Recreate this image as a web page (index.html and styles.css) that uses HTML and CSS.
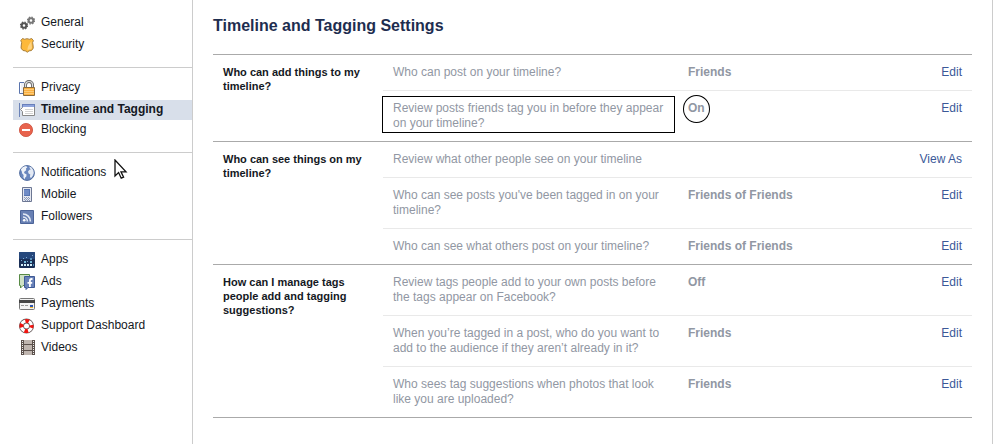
FILE: index.html
```
<!DOCTYPE html>
<html lang="en">
<head>
<meta charset="UTF-8">
<meta name="viewport" content="width=device-width, initial-scale=1.0">
<title>Timeline and Tagging Settings</title>
<link rel="stylesheet" href="styles.css">
</head>
<body>
<div class="page">
<nav class="sidebar">
<ul class="group">
<li><a href="#general">
<svg class="icon" viewBox="0 0 16 16" fill="none"><circle cx="5" cy="10.5" r="2.300" stroke="#555" stroke-width="2"/><circle cx="5" cy="10.5" r="3.500" stroke="#555" stroke-width="1.200" stroke-dasharray="1.500 1.250"/><circle cx="12" cy="5.500" r="2.300" stroke="#777" stroke-width="2"/><circle cx="12" cy="5.500" r="3.500" stroke="#777" stroke-width="1.200" stroke-dasharray="1.500 1.250"/></svg>
<span>General</span></a></li>
<li><a href="#security">
<svg class="icon" viewBox="0 0 16 16"><path d="M3.5 1.5 Q5.5 3 8 1.7 Q10.5 3 12.7 1.5 L14.4 3.6 Q13 5.5 14 8 Q15.2 11.5 12.5 13.5 Q9.8 13.4 8.3 15.2 Q6.5 13.4 4 13.5 Q1 11.5 2.3 8 Q3.3 5.5 1.8 3.6Z" fill="#fdb93a" stroke="#a8803f"/><path d="M12.6 4 Q12 6 12.7 8 Q13.5 11 12 12.4 Q10 12.2 8.5 13.5 Q8 9 12.6 4Z" fill="#fed37f"/></svg>
<span>Security</span></a></li>
</ul>
<ul class="group">
<li><a href="#privacy">
<svg class="icon" viewBox="0 0 16 16"><path d="M5 2.5H.5v11H5" fill="#fff" stroke="#5a74ad"/><path d="M2 3h4v10H2z" fill="#eef0f6"/><path d="M6.500 8V5a3.500 3.500 0 0 1 7 0v3" fill="none" stroke="#666" stroke-width="3"/><path d="M6.500 8V5a3.500 3.500 0 0 1 7 0v3" fill="none" stroke="#ddd" stroke-width="1.200"/><path d="M4.500 7.500h11v8h-11z" fill="#fbb040" stroke="#8a6a3c"/><path d="M5 9.500h10M5 11.500h10M5 13.500h10" stroke="#fdcb78"/></svg>
<span>Privacy</span></a></li>
<li class="selected"><a href="#timeline" aria-current="page">
<svg class="icon" viewBox="0 0 16 16"><path d="M.5 1v14" stroke="#6b83b8"/><path d="M3.500 2.500h12v11h-12v-4L1.500 7.500 3.500 5.500z" fill="#fff" stroke="#888"/><path d="M3 2h13v3H3z" fill="#6980bb"/><path d="M4 3h11v2H4z" fill="#8fa5dd"/><path d="M6 7h8v1H6zM6 9h8v1H6zM6 11h8v1H6z" fill="#d4d4d4"/></svg>
<span>Timeline and Tagging</span></a></li>
<li><a href="#blocking">
<svg class="icon" viewBox="0 0 16 16"><circle cx="7" cy="8" r="6.600" fill="#e8634d" stroke="#cc4e3b" stroke-width=".8"/><path d="M3 7h8v2H3z" fill="#fff"/></svg>
<span>Blocking</span></a></li>
</ul>
<ul class="group">
<li><a href="#notifications">
<svg class="icon" viewBox="0 0 16 16"><circle cx="8" cy="8" r="7.400" fill="#6a87be" stroke="#526d9f"/><path d="M1.800 4.500 4 2l3-1 1.400 1.200L7 3.400l.2 1.800L5.500 6.400 5 8l2.600 1.400-.3 2-1.300 1.400-.2 1.700-1.400-2 .2-2.500L3.200 8.400 2.800 6.400z" fill="#eef2f8"/><path d="M10.500 1.600 12.500 2.600 14.200 5l.6 3-1 2.800-1.900 2.400-1-1.600.4-2-1.700-1L9 6.500l1.400-1.700 1.400-.4L10.600 3z" fill="#e4eaf4"/></svg>
<span>Notifications</span></a></li>
<li><a href="#mobile">
<svg class="icon" viewBox="0 0 16 16"><path d="M3.500.5h9v14h-9z" fill="#e4e7f0" stroke="#6c7793"/><path d="M5 2h6v7H5z" fill="#5473b2"/><path d="M5 3h5v5H5z" fill="#6f8bc6"/><path d="M5 10.500h6M5 12.500h6" stroke="#8b99b9" stroke-dasharray="1 1"/><path d="M6 11.500h5M6 13.500h5" stroke="#8b99b9" stroke-dasharray="1 1"/></svg>
<span>Mobile</span></a></li>
<li><a href="#followers">
<svg class="icon" viewBox="0 0 16 16" fill="none"><path d="M1.500 1.500h13v13h-13z" fill="#6880b4" stroke="#4c6498"/><circle cx="5.200" cy="11.200" r="1.300" fill="#fff"/><path d="M4 8a4.400 4.400 0 0 1 4.400 4.400M4 5a7.400 7.400 0 0 1 7.400 7.400" stroke="#e4eaf5" stroke-width="1.600"/></svg>
<span>Followers</span></a></li>
</ul>
<ul class="group">
<li><a href="#apps">
<svg class="icon" viewBox="0 0 16 16"><rect width="16" height="16" rx="1" fill="#1a2f56"/><rect width="16" height="7" rx="1" fill="#26487c"/><path d="M2 12h2v2H2zM5 12h2v2H5zM8 12h2v2H8zM11 12h2v2h-2z" fill="#d6f0fa"/><path d="M5 9h2v2H5zM11 9h2v2h-2z" fill="#75badb"/><path d="M11 6h2v2h-2z" fill="#5a94c0"/><path d="M2 8h1v1H2zM7 5h1v1H7zM8 9h1v1H8zM13 3h1v1h-1zM4 6h1v1H4z" fill="#7fa9ce"/><path d="M14 12h1v2h-1z" fill="#4b8cb8"/></svg>
<span>Apps</span></a></li>
<li><a href="#ads">
<svg class="icon" viewBox="0 0 16 16"><path d="M.5.5h10v11H4l-2.500 2.500v-2.500h-1z" fill="#cfe2c5" stroke="#588a46"/><path d="M5.500 2.500h10v11H9L7 15.500v-2H5.500z" fill="#6881b8" stroke="#3f5a96"/><path d="M13.500 5h-1c-1.200 0-1.600.6-1.600 1.700V13M8.500 8.800h4.700" fill="none" stroke="#fff" stroke-width="1.800"/></svg>
<span>Ads</span></a></li>
<li><a href="#payments">
<svg class="icon" viewBox="0 0 16 16"><rect x=".5" y="2.500" width="15" height="11" rx="1" fill="#f2f2f2" stroke="#777"/><path d="M0 4h16v3H0z" fill="#454545"/><path d="M2 9.500h8" stroke="#999" stroke-dasharray="3 1"/><path d="M11 9h3v2h-3z" fill="#2f56ae"/><path d="M11 11h3v1h-3z" fill="#f6b92b"/></svg>
<span>Payments</span></a></li>
<li><a href="#support">
<svg class="icon" viewBox="0 0 16 16" fill="none"><circle cx="7.500" cy="8" r="5" stroke="#6b5f5f" stroke-width="5"/><circle cx="7.500" cy="8" r="5" stroke="#fff" stroke-width="3.200"/><circle cx="7.500" cy="8" r="5" stroke="#f01410" stroke-width="4" stroke-dasharray="3.600 4.254" stroke-dashoffset="1.800"/></svg>
<span>Support Dashboard</span></a></li>
<li><a href="#videos">
<svg class="icon" viewBox="0 0 16 16"><path d="M2 0h14v15H2z" fill="#5c514c"/><path d="M5 0h8v4H5zM5 5h8v5H5zM5 11h8v4H5z" fill="#bfb5af"/><path d="M3.500 1v14M14.500 1v14" stroke="#eee" stroke-dasharray="1 1"/></svg>
<span>Videos</span></a></li>
</ul>
</nav>
<main class="content">
<h1>Timeline and Tagging Settings</h1>
<section class="settings">
<h2>Who can add things to my timeline?</h2>
<ul class="rows">
<li><span class="question">Who can post on your timeline?</span><span class="value">Friends</span><a href="#edit">Edit</a></li>
<li><span class="question boxed">Review posts friends tag you in before they appear on your timeline?</span><span class="value circled">On</span><a href="#edit">Edit</a></li>
</ul>
</section>
<section class="settings">
<h2>Who can see things on my timeline?</h2>
<ul class="rows">
<li><span class="question">Review what other people see on your timeline</span><span class="value"></span><a href="#view">View As</a></li>
<li><span class="question">Who can see posts you've been tagged in on your timeline?</span><span class="value">Friends of Friends</span><a href="#edit">Edit</a></li>
<li><span class="question">Who can see what others post on your timeline?</span><span class="value">Friends of Friends</span><a href="#edit">Edit</a></li>
</ul>
</section>
<section class="settings">
<h2>How can I manage tags people add and tagging suggestions?</h2>
<ul class="rows">
<li><span class="question">Review tags people add to your own posts before the tags appear on Facebook?</span><span class="value">Off</span><a href="#edit">Edit</a></li>
<li><span class="question">When you’re tagged in a post, who do you want to add to the audience if they aren’t already in it?</span><span class="value">Friends</span><a href="#edit">Edit</a></li>
<li><span class="question">Who sees tag suggestions when photos that look like you are uploaded?</span><span class="value">Friends</span><a href="#edit">Edit</a></li>
</ul>
</section>
</main>
</div>
<svg class="cursor" viewBox="0 0 14 21"><path d="M1 1v16l3.600-3.400 2.600 5.600 2.400-1.100-2.600-5.300h5z" fill="#fff" stroke="#111" stroke-width="1.300"/></svg>
</body>
</html>
```
FILE: styles.css
```
*,*::after{box-sizing:border-box;}
body{margin:0;background:#fff;color:#141823;font-family:"Liberation Sans",Arial,sans-serif;font-size:12px;line-height:15px;}
ul{list-style:none;margin:0;padding:0;}
a{color:#3b5998;text-decoration:none;}
a:hover{text-decoration:underline;}
.page{display:flex;min-height:100vh;}

/* left menu */
.sidebar{flex:0 0 193px;padding:3px 0 0 13px;border-right:1px solid #ccc;}
.group{padding:10px 0 12px;border-bottom:1px solid #ccc;}
.group:last-child{border-bottom:none;}
.group li{margin-bottom:2px;}
.group li:last-child,.group li.selected{margin-bottom:0;}
.group a{display:flex;align-items:center;gap:6px;height:20px;padding-left:6px;color:#141823;}
.group span{padding-bottom:2px;}
.selected{background:#d8dfea;font-weight:bold;}
.icon{width:16px;height:16px;flex:none;}

/* settings list */
.content{flex:1;margin-right:6px;padding:16px 20px 26px;border-right:1px solid #ccc;}
h1{margin:0 0 18px;font-size:16px;line-height:20px;color:#1e2d4f;}
.settings{display:flex;border-top:1px solid #aaa;}
.settings:last-child{border-bottom:1px solid #aaa;}
.settings h2{flex:0 0 170px;margin:0;padding:10px;font-size:11px;line-height:14px;}
.rows{flex:1;}
.rows li{display:grid;grid-template-columns:280px 1fr auto;gap:15px;padding:10px;color:#9197a3;}
.rows li + li{border-top:1px solid #e9e9e9;}
.value{font-weight:bold;}

/* highlight marks */
.boxed,.circled{position:relative;}
.boxed::after{content:"";position:absolute;inset:-5px -2px -2px -11px;border:1px solid #000;}
.circled::after{content:"";position:absolute;left:-5px;top:-6px;width:27px;height:28px;border:1px solid #000;border-radius:50%;}
.cursor{position:absolute;left:114px;top:159px;width:14px;height:21px;}
```
